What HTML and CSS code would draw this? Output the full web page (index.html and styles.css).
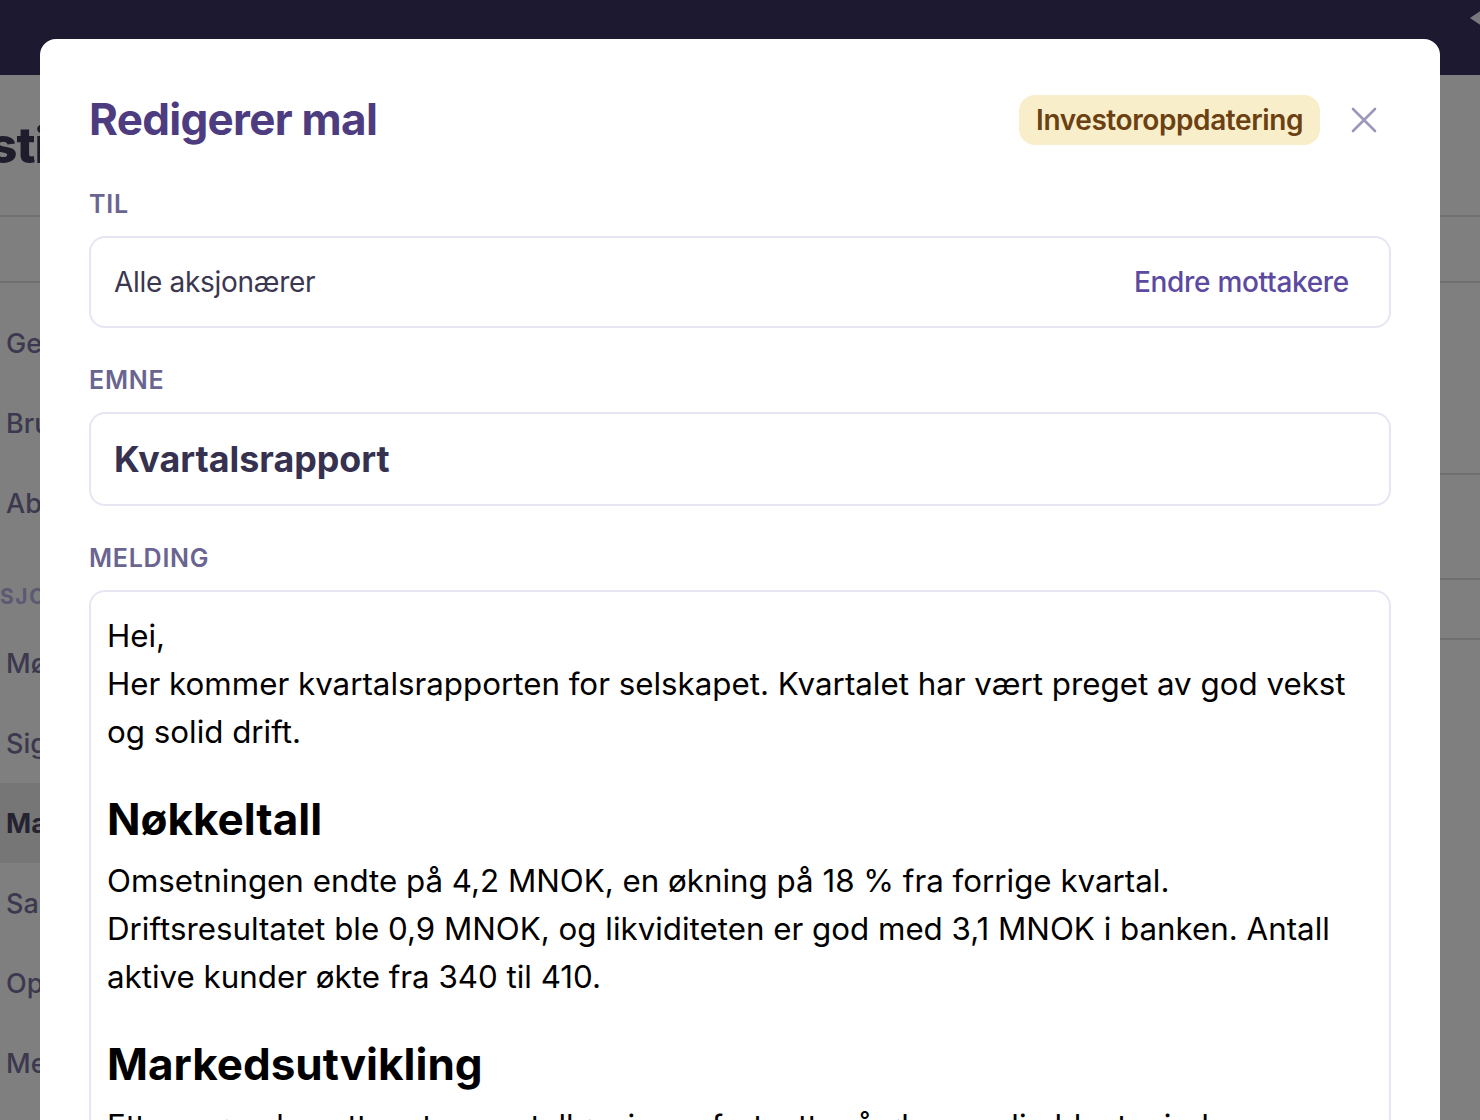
FILE: index.html
```html
<!DOCTYPE html>
<html lang="no">
<head>
<meta charset="utf-8">
<title>Redigerer mal</title>
<link rel="stylesheet" href="styles.css">
</head>
<body>
<div class="app">
  <header class="topbar">
    <span class="topbar-icon"><svg width="14" height="20" viewBox="0 0 14 20"><polygon points="14,2 2,10 14,18" fill="#f2f0fa"/></svg></span>
  </header>
  <div class="page-head"><h1 class="page-title">Innstillinger</h1></div>
  <div class="tabs"></div>
  <div class="page-body">
    <nav class="sidebar">
      <div class="nav-item">Generelt</div>
      <div class="nav-item">Brukere</div>
      <div class="nav-item">Abonnement</div>
      <div class="nav-section">AKSJONÆRER</div>
      <div class="nav-item">Møter</div>
      <div class="nav-item">Signering</div>
      <div class="nav-item active">Maler</div>
      <div class="nav-item">Saker</div>
      <div class="nav-item">Oppgaver</div>
      <div class="nav-item">Meldinger</div>
    </nav>
    <main class="content">
      <div class="block block-lg"></div>
      <div class="block block-md"></div>
      <div class="block block-sm"></div>
    </main>
  </div>
</div>
<div class="overlay"></div>
<section class="modal">
  <div class="modal-header">
    <h2 class="modal-title">Redigerer mal</h2>
    <span class="badge">Investoroppdatering</span>
    <button class="close" type="button" aria-label="Lukk">
      <svg width="26" height="26" viewBox="0 0 26 26"><path d="M2 2 L24 24 M24 2 L2 24" stroke="#9d97bb" stroke-width="2.6" stroke-linecap="round" fill="none"/></svg>
    </button>
  </div>

  <div class="field-label label-first">Til</div>
  <div class="field recipient-field">
    <span class="recipients">Alle aksjonærer</span>
    <button class="link-btn" type="button">Endre mottakere</button>
  </div>

  <div class="field-label">Emne</div>
  <div class="field subject-field">Kvartalsrapport</div>

  <div class="field-label">Melding</div>
  <div class="field editor">
    <p>Hei,<br>Her kommer kvartalsrapporten for selskapet. Kvartalet har vært preget av god vekst og solid drift.</p>
    <h3>Nøkkeltall</h3>
    <p>Omsetningen endte på 4,2 MNOK, en økning på 18&nbsp;% fra forrige kvartal.<br>Driftsresultatet ble 0,9 MNOK, og likviditeten er god med 3,1 MNOK i banken. Antall aktive kunder økte fra 340 til 410.</p>
    <h3>Markedsutvikling</h3>
    <p>Etterspørselen etter styreportalløsninger fortsetter å øke, særlig blant mindre selskaper som ønsker bedre oversikt over styrearbeidet.</p>
  </div>
</section>
</body>
</html>
```
FILE: styles.css
```css
html, body {
  margin: 0;
  padding: 0;
}
body {
  width: 1480px;
  height: 1120px;
  overflow: hidden;
  position: relative;
  background: #ffffff;
  font-family: Inter, "Noto Sans", "Liberation Sans", sans-serif;
}

/* background page */
.topbar {
  height: 75px;
  background: #3b3362;
  display: flex;
  justify-content: flex-end;
  align-items: flex-start;
}
.topbar-icon {
  display: block;
  margin-top: 8px;
  margin-right: -2px;
}
.page-head {
  height: 140px;
  border-bottom: 2px solid #dedede;
  display: flex;
  align-items: center;
}
.page-title {
  margin: 0 0 0 -86px;
  font-size: 50px;
  font-weight: 800;
  letter-spacing: -0.02em;
  color: #3e3858;
}
.tabs {
  height: 64px;
  border-bottom: 2px solid #dedede;
}
.page-body {
  display: flex;
}
.sidebar {
  width: 320px;
  padding-top: 20px;
}
.nav-item {
  height: 80px;
  display: flex;
  align-items: center;
  padding-left: 6px;
  font-size: 27px;
  font-weight: 500;
  color: #77719e;
}
.nav-item.active {
  background: #ededed;
  font-weight: 700;
  color: #4a4462;
}
.nav-section {
  padding: 40px 0 12px 0;
  margin-left: -34px;
  font-size: 21px;
  line-height: 28px;
  font-weight: 700;
  letter-spacing: 0.08em;
  color: #b9b3e4;
}
.content {
  flex: 1;
}
.block {
  border-bottom: 2px solid #dedede;
}
.block-lg { height: 190px; }
.block-md { height: 103px; }
.block-sm { height: 58px; }

.overlay {
  position: absolute;
  inset: 0;
  background: rgba(0, 0, 0, 0.5);
}

/* modal */
.modal {
  position: absolute;
  top: 39px;
  left: 40px;
  width: 1400px;
  min-height: 1200px;
  box-sizing: border-box;
  padding: 54px 49px 40px;
  background: #ffffff;
  border-radius: 16px;
}
.modal-header {
  display: flex;
  align-items: center;
  height: 53px;
}
.modal-title {
  flex: 1;
  margin: 0;
  font-size: 44px;
  line-height: 1.2;
  font-weight: 700;
  letter-spacing: -0.016em;
  color: #4d3c7f;
}
.badge {
  display: flex;
  align-items: center;
  height: 50px;
  padding: 0 17px;
  box-sizing: border-box;
  border-radius: 16px;
  background: #f8eec9;
  color: #6b4013;
  font-size: 28px;
  font-weight: 600;
  letter-spacing: -0.4px;
}
.close {
  width: 40px;
  height: 40px;
  margin-left: 24px;
  margin-right: 7px;
  padding: 0;
  border: 0;
  background: none;
  display: grid;
  place-items: center;
}

.field-label {
  margin: 38px 0 18px;
  font-size: 25px;
  line-height: 28px;
  font-weight: 600;
  text-transform: uppercase;
  letter-spacing: 0.03em;
  color: #6a6590;
}
.label-first {
  margin-top: 44px;
}
.field {
  box-sizing: border-box;
  border: 2px solid #e8e5f3;
  border-radius: 16px;
}
.recipient-field {
  height: 92px;
  display: flex;
  align-items: center;
  justify-content: space-between;
  padding: 0 24px 0 23px;
}
.recipients {
  font-size: 28px;
  letter-spacing: -0.3px;
  color: #3b3750;
}
.link-btn {
  padding: 0 16px;
  border: 0;
  background: none;
  font-family: inherit;
  font-size: 28px;
  font-weight: 500;
  letter-spacing: -0.3px;
  color: #5b4a9f;
}
.subject-field {
  height: 94px;
  display: flex;
  align-items: center;
  padding: 0 23px;
  font-size: 35.8px;
  font-weight: 700;
  color: #35314f;
}
.editor {
  padding: 20px 16px;
  min-height: 600px;
  color: #000000;
}
.editor p {
  margin: 0;
  font-size: 31.3px;
  line-height: 48px;
}
.editor h3 {
  margin: 37px 0 11px;
  font-size: 44px;
  line-height: 1.2;
  font-weight: 700;
}
```
